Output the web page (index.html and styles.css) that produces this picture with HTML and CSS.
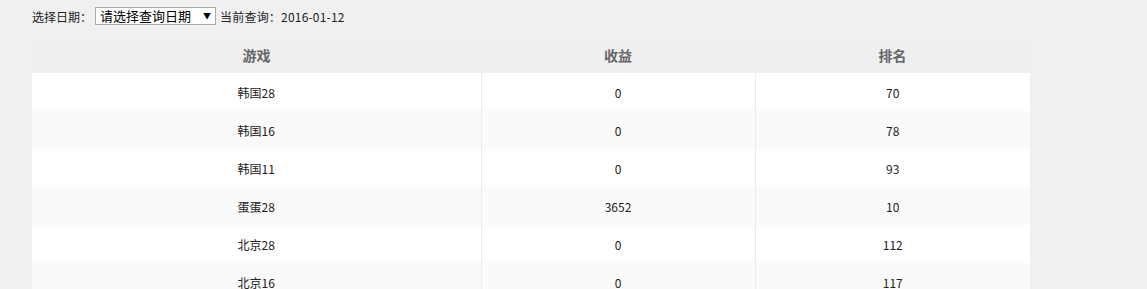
FILE: index.html
```html
<!DOCTYPE html>
<html lang="zh-CN">
<head>
<meta charset="utf-8">
<title>收益排名</title>
<link rel="stylesheet" href="styles.css">
</head>
<body>
<div class="toolbar">
  <span class="label">选择日期<span class="colon">：</span></span>
  <span class="select-wrap">
    <select class="date-select">
      <option>请选择查询日期</option>
    </select>
    <span class="arrow">▼</span>
  </span>
  <span class="current">当前查询<span class="colon">：</span>2016-01-12</span>
</div>
<table class="rank">
  <thead>
    <tr><th class="c1">游戏</th><th class="c2">收益</th><th class="c3">排名</th></tr>
  </thead>
  <tbody>
    <tr><td>韩国28</td><td>0</td><td>70</td></tr>
    <tr><td>韩国16</td><td>0</td><td>78</td></tr>
    <tr><td>韩国11</td><td>0</td><td>93</td></tr>
    <tr><td>蛋蛋28</td><td>3652</td><td>10</td></tr>
    <tr><td>北京28</td><td>0</td><td>112</td></tr>
    <tr><td>北京16</td><td>0</td><td>117</td></tr>
  </tbody>
</table>
</body>
</html>
```
FILE: styles.css
```css
html, body {
  margin: 0;
  padding: 0;
  background: #f0f0f0;
  font-family: "Noto Sans CJK SC", "Microsoft YaHei", sans-serif;
  font-size: 12px;
  color: #222;
}
.toolbar {
  display: flex;
  align-items: center;
  height: 18px;
  padding: 7px 0 0 32px;
  margin-bottom: 12px;
}
.colon {
  font-family: "Noto Sans CJK TC", sans-serif;
}
.label {
  margin-right: 3px;
}
.select-wrap {
  position: relative;
  display: inline-block;
  margin-right: 4px;
}
.date-select {
  appearance: none;
  -webkit-appearance: none;
  box-sizing: border-box;
  width: 121px;
  height: 18px;
  margin: 0;
  padding: 0 0 0 4px;
  border: 1px solid #a9a9a9;
  border-radius: 0;
  background: #fff;
  font-family: "Noto Sans CJK SC", sans-serif;
  font-size: 13px;
  line-height: 16px;
  color: #000;
}
.arrow {
  position: absolute;
  right: 5px;
  top: 3px;
  font-size: 8px;
  line-height: 12px;
  color: #000;
  pointer-events: none;
}
.current {
  letter-spacing: 0.2px;
}
.rank {
  margin-left: 32px;
  width: 998px;
  border-collapse: collapse;
  table-layout: fixed;
}
.rank th {
  height: 36px;
  padding: 0;
  background: #efefef;
  color: #666;
  font-size: 14px;
  font-weight: bold;
  text-align: center;
}
.c1 { width: 449px; }
.c2 { width: 274px; }
.c3 { width: 275px; }
.rank td {
  height: 38px;
  padding: 0;
  text-align: center;
  background: #fff;
}
.rank tbody tr:nth-child(even) td {
  background: #fafafa;
}
.rank td + td {
  border-left: 1px solid #ebebeb;
}
```
